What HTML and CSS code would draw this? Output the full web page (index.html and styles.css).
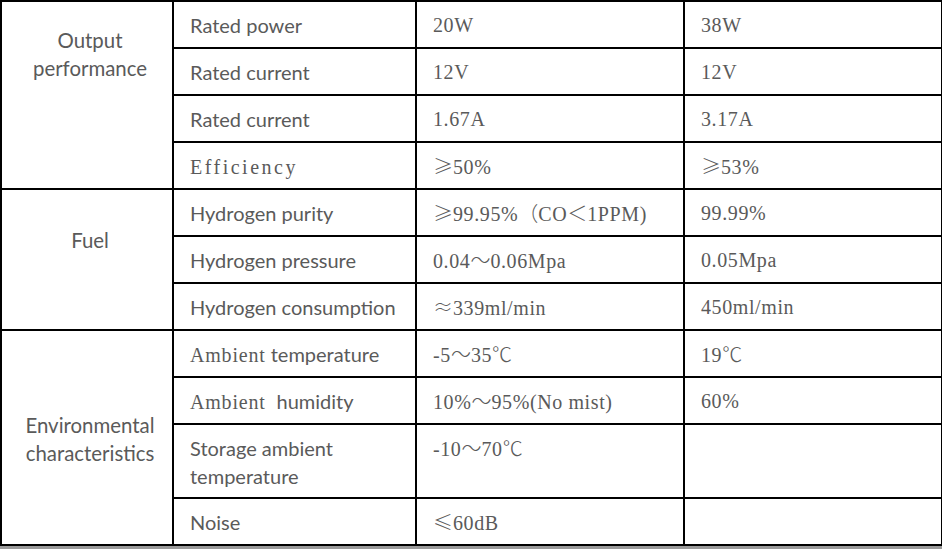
FILE: index.html
```html
<!DOCTYPE html>
<html lang="en">
<head>
<meta charset="utf-8">
<title>Specifications</title>
<link rel="stylesheet" href="styles.css">
</head>
<body>
<table class="spec">
  <colgroup>
    <col class="c1"><col class="c2"><col class="c3"><col class="c4">
  </colgroup>
  <tbody>
    <tr>
      <td class="group g-output" rowspan="4">Output<br>performance</td>
      <td class="label">Rated power</td>
      <td class="val">20W</td>
      <td class="val">38W</td>
    </tr>
    <tr>
      <td class="label">Rated current</td>
      <td class="val">12V</td>
      <td class="val">12V</td>
    </tr>
    <tr>
      <td class="label">Rated current</td>
      <td class="val">1.67A</td>
      <td class="val">3.17A</td>
    </tr>
    <tr>
      <td class="label"><span class="serif wide-lg">Efficiency</span></td>
      <td class="val"><span class="fw">≥</span>50%</td>
      <td class="val"><span class="fw">≥</span>53%</td>
    </tr>
    <tr>
      <td class="group g-fuel" rowspan="3">Fuel</td>
      <td class="label">Hydrogen purity</td>
      <td class="val"><span class="fw">≥</span>99.95%<span class="fw">（</span>CO<span class="fw">＜</span>1PPM)</td>
      <td class="val">99.99%</td>
    </tr>
    <tr>
      <td class="label">Hydrogen pressure</td>
      <td class="val">0.04<span class="fw">～</span>0.06Mpa</td>
      <td class="val">0.05Mpa</td>
    </tr>
    <tr>
      <td class="label">Hydrogen consumption</td>
      <td class="val"><span class="fw">≈</span>339ml/min</td>
      <td class="val">450ml/min</td>
    </tr>
    <tr>
      <td class="group g-env" rowspan="4">Environmental<br>characteristics</td>
      <td class="label"><span class="serif wide-sm">Ambient</span> temperature</td>
      <td class="val">-5<span class="fw">～</span>35<span class="fw">℃</span></td>
      <td class="val">19<span class="fw">℃</span></td>
    </tr>
    <tr>
      <td class="label"><span class="serif wide-sm">Ambient&nbsp;</span> humidity</td>
      <td class="val">10%<span class="fw">～</span>95%(No mist)</td>
      <td class="val">60%</td>
    </tr>
    <tr class="tall">
      <td class="label">Storage ambient<br>temperature</td>
      <td class="val">-10<span class="fw">～</span>70<span class="fw">℃</span></td>
      <td class="val"></td>
    </tr>
    <tr>
      <td class="label">Noise</td>
      <td class="val"><span class="fw">≤</span>60dB</td>
      <td class="val"></td>
    </tr>
  </tbody>
</table>
</body>
</html>
```

FILE: styles.css
```css
html, body {
  margin: 0;
  padding: 0;
}
body {
  background: #9a9a9a;
  width: 942px;
  height: 549px;
  overflow: hidden;
}
.spec {
  border-collapse: collapse;
  table-layout: fixed;
  width: 941px;
  background: #fff;
  color: #5a5a5a;
  font-family: "Lato", "Liberation Sans", sans-serif;
  font-size: 20px;
  line-height: 28px;
}
.c1 { width: 172px; }
.c2 { width: 243px; }
.c3 { width: 268px; }
.c4 { width: 258px; }
.spec td {
  border: 2px solid #000;
  vertical-align: top;
  padding: 9px 0 0 0;
  box-sizing: border-box;
}
.spec tr {
  height: 47px;
}
.spec tr.tall {
  height: 74px;
}
.spec td.label {
  padding-left: 16px;
}
.spec td.val {
  padding-left: 16px;
  font-family: "Liberation Serif", "Noto Sans CJK SC", serif;
  font-size: 20px;
  letter-spacing: 0.03em;
}
.spec td.group {
  text-align: center;
  padding-left: 6px;
  font-size: 20.4px;
}
.spec td.g-output { padding-top: 24px; }
.spec td.g-fuel { padding-top: 36px; }
.spec td.g-env { padding-top: 80px; }
.serif {
  font-family: "Liberation Serif", "Noto Sans CJK SC", serif;
}
.wide-lg {
  letter-spacing: 2.5px;
}
.wide-sm {
  letter-spacing: 0.8px;
}
.fw {
  font-family: "Noto Sans CJK SC", sans-serif;
  font-weight: 300;
  letter-spacing: 0;
}
```
